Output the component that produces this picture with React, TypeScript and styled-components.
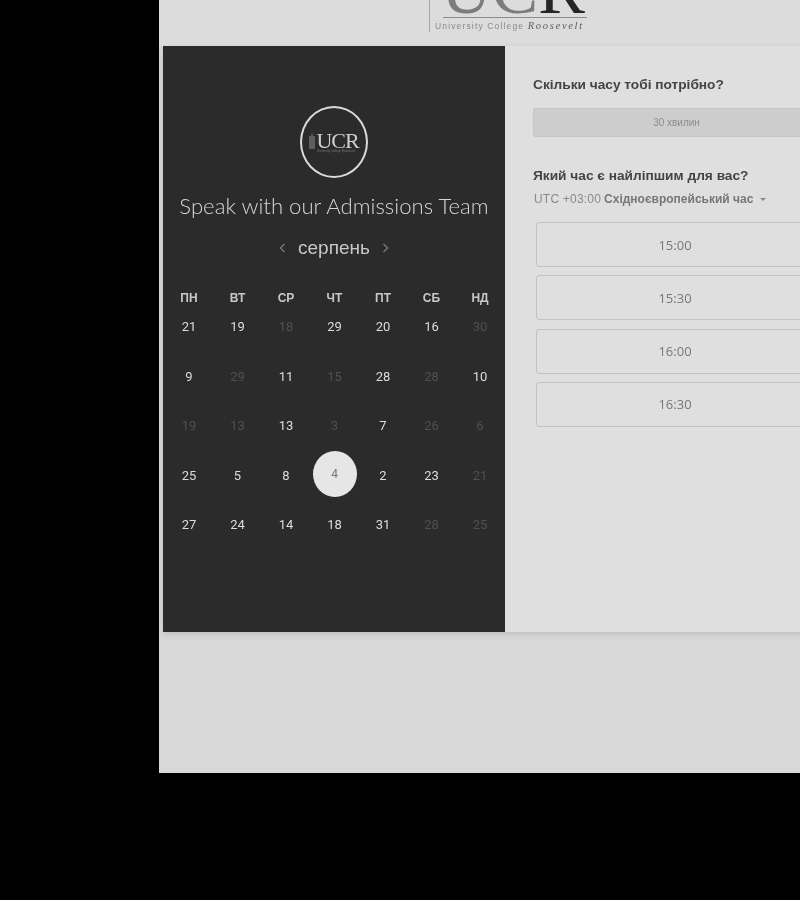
import React from "react";
import styled, { createGlobalStyle } from "styled-components";

const GlobalStyle = createGlobalStyle`
  html, body {
    margin: 0;
    height: 900px;
    overflow: hidden;
    background: #000;
    font-family: "Liberation Sans", Arial, sans-serif;
  }
`;

const Page = styled.div`
  width: 800px;
  height: 900px;
  overflow: hidden;
  padding-left: 159px;
  box-sizing: border-box;
`;

const Frame = styled.div`
  width: 690px;
  height: 773px;
  background: #d8d8d8;
  box-sizing: border-box;
  padding-left: 4px;
  filter: blur(0.5px);
`;

const Header = styled.div`
  height: 46px;
  overflow: hidden;
  display: flex;
  align-items: flex-end;
  padding-left: 270px;
  background: #dcdcdc;
  margin-left: -4px;
`;

const Logo = styled.div`
  width: 157px;
  height: 60px;
  flex: none;
  margin-bottom: 14px;
  position: relative;
  border-left: 1px solid #a8a8a8;
`;

const LogoMark = styled.div`
  position: absolute;
  left: 13px;
  right: 0;
  top: 0;
  height: 45px;
  overflow: hidden;
  border-bottom: 1px solid #8c8c8c;
  font-family: "Liberation Serif", serif;
  font-size: 70px;
  line-height: 36px;
  text-indent: -2px;
  color: #7c7c7c;
  white-space: nowrap;
`;

const LogoMarkDark = styled.span`
  color: #262626;
`;

const LogoCaption = styled.div`
  position: absolute;
  left: 5px;
  bottom: 1px;
  font-size: 8.5px;
  letter-spacing: 1.15px;
  color: #8a8a8a;
  white-space: nowrap;
`;

const LogoCaptionName = styled.span`
  font-family: "Liberation Serif", serif;
  font-style: italic;
  font-size: 10.5px;
  letter-spacing: 1.7px;
  color: #606060;
`;

const Card = styled.div`
  display: flex;
  height: 586px;
  width: 674px;
  box-shadow: 0 2px 6px rgba(0, 0, 0, 0.12);
`;

const LeftPanel = styled.div`
  width: 342px;
  flex: none;
  background: #2b2b2b;
  color: #e6e6e6;
  display: flex;
  flex-direction: column;
  align-items: center;
  padding-top: 60px;
  box-sizing: border-box;
`;

const Badge = styled.div`
  width: 64px;
  height: 68px;
  border: 2px solid #dadada;
  border-radius: 50%;
  display: flex;
  flex-direction: column;
  align-items: center;
  justify-content: center;
  position: relative;
`;

const BadgeLetters = styled.div`
  font-family: "Liberation Serif", serif;
  font-size: 22px;
  line-height: 17px;
  letter-spacing: -1px;
  color: #cfcfcf;
  margin-left: 7px;
`;

const BadgeCaption = styled.div`
  font-size: 3px;
  line-height: 3px;
  margin-top: 1px;
  margin-left: 4px;
  color: #7a7a7a;
  white-space: nowrap;
`;

const BadgeTower = styled.svg`
  position: absolute;
  left: 6px;
  top: 24px;
`;

const Title = styled.div`
  font-family: Lato, sans-serif;
  font-weight: 300;
  font-size: 22.15px;
  line-height: 28px;
  margin-top: 14px;
  color: #d6d6d6;
  white-space: nowrap;
`;

const MonthRow = styled.div`
  display: flex;
  align-items: center;
  gap: 12px;
  margin-top: 14px;
  height: 28px;
  font-size: 19px;
  color: #c8c8c8;
`;

const Chevron = styled.svg`
  display: block;
`;

const HeadRow = styled.div`
  display: grid;
  grid-template-columns: repeat(7, 48.5px);
  margin-top: 24px;
  margin-left: 1px;
`;

const DayHead = styled.div`
  height: 24px;
  display: flex;
  justify-content: center;
  align-items: center;
  font-size: 12px;
  font-weight: 700;
  color: #c8c8c8;
`;

const Calendar = styled.div`
  display: grid;
  grid-template-columns: repeat(7, 48.5px);
  grid-auto-rows: 49.5px;
  margin-top: 4px;
  margin-left: 1px;
`;

const Day = styled.div<{ $active?: boolean }>`
  display: flex;
  justify-content: center;
  padding-top: 5px;
  font-family: Roboto, sans-serif;
  font-size: 13px;
  line-height: 16px;
  color: ${(p) => (p.$active ? "#dcdcdc" : "#505050")};
`;

const SelectedDay = styled.div`
  width: 44px;
  height: 46px;
  border-radius: 50%;
  background: #e6e6e6;
  color: #777;
  font-family: Roboto, sans-serif;
  font-size: 12px;
  display: flex;
  align-items: center;
  justify-content: center;
  justify-self: center;
  margin-top: -12px;
  box-sizing: border-box;
`;

const RightPanel = styled.div`
  flex: 1;
  background: #dfdfdf;
  padding: 30px 17px 0 28px;
  box-sizing: border-box;
`;

const Question = styled.div`
  font-size: 13.7px;
  line-height: 18px;
  font-weight: 700;
  color: #444;
`;

const DurationButton = styled.div`
  height: 29px;
  margin-top: 14px;
  background: #cdcdcd;
  border: 1px solid #c6c6c6;
  border-radius: 2px;
  box-sizing: border-box;
  display: flex;
  align-items: center;
  justify-content: center;
  font-size: 10px;
  color: #8c8c8c;
`;

const SecondQuestion = styled(Question)`
  margin-top: 30px;
`;

const Timezone = styled.div`
  display: flex;
  align-items: center;
  gap: 5px;
  margin-top: 6px;
  margin-left: 1px;
  font-size: 12px;
  line-height: 16px;
  letter-spacing: 0.2px;
  color: #8a8a8a;
`;

const TimezoneName = styled.span`
  font-weight: 700;
  letter-spacing: 0;
  color: #777;
  margin-left: -2px;
`;

const Caret = styled.span`
  width: 0;
  height: 0;
  border-left: 3.5px solid transparent;
  border-right: 3.5px solid transparent;
  border-top: 3.5px solid #8a8a8a;
  margin-left: 2px;
`;

const Slots = styled.div`
  display: flex;
  flex-direction: column;
  gap: 8.3px;
  margin: 15px 6px 0 3px;
`;

const Slot = styled.div`
  height: 45px;
  border: 1px solid #c2c2c2;
  border-radius: 3px;
  box-sizing: border-box;
  display: flex;
  align-items: center;
  justify-content: center;
  font-family: "Open Sans", sans-serif;
  font-size: 13px;
  color: #777;
`;

const heads = ["ПН", "ВТ", "СР", "ЧТ", "ПТ", "СБ", "НД"];

// [number, available]; 0 marks the selected day
const days: [number, boolean][] = [
  [21, true], [19, true], [18, false], [29, true], [20, true], [16, true], [30, false],
  [9, true], [29, false], [11, true], [15, false], [28, true], [28, false], [10, true],
  [19, false], [13, false], [13, true], [3, false], [7, true], [26, false], [6, false],
  [25, true], [5, true], [8, true], [0, true], [2, true], [23, true], [21, false],
  [27, true], [24, true], [14, true], [18, true], [31, true], [28, false], [25, false],
];

const slots = ["15:00", "15:30", "16:00", "16:30"];

export default function App() {
  return (
    <Page>
      <GlobalStyle />
      <Frame>
        <Header>
          <Logo>
            <LogoMark>
              UC<LogoMarkDark>R</LogoMarkDark>
            </LogoMark>
            <LogoCaption>
              University College <LogoCaptionName>Roosevelt</LogoCaptionName>
            </LogoCaption>
          </Logo>
        </Header>
        <Card>
          <LeftPanel>
            <Badge>
              <BadgeTower width="8" height="17" viewBox="0 0 8 17">
                <path d="M4 0l1 4h2v13H1V4h2z" fill="#5e5e5e" />
              </BadgeTower>
              <BadgeLetters>UCR</BadgeLetters>
              <BadgeCaption>University College Roosevelt</BadgeCaption>
            </Badge>
            <Title>Speak with our Admissions Team</Title>
            <MonthRow>
              <Chevron width="7" height="10" viewBox="0 0 7 10">
                <path d="M5.5 1L1.5 5l4 4" fill="none" stroke="#777" strokeWidth="1.4" />
              </Chevron>
              <span>серпень</span>
              <Chevron width="7" height="10" viewBox="0 0 7 10">
                <path d="M1.5 1l4 4-4 4" fill="none" stroke="#777" strokeWidth="1.4" />
              </Chevron>
            </MonthRow>
            <HeadRow>
              {heads.map((h) => (
                <DayHead key={h}>{h}</DayHead>
              ))}
            </HeadRow>
            <Calendar>
              {days.map(([n, active], i) =>
                n === 0 ? (
                  <SelectedDay key={i}>4</SelectedDay>
                ) : (
                  <Day key={i} $active={active}>
                    {n}
                  </Day>
                )
              )}
            </Calendar>
          </LeftPanel>
          <RightPanel>
            <Question>Скільки часу тобі потрібно?</Question>
            <DurationButton>30 хвилин</DurationButton>
            <SecondQuestion>Який час є найліпшим для вас?</SecondQuestion>
            <Timezone>
              UTC +03:00 <TimezoneName>Східноєвропейський час</TimezoneName>
              <Caret />
            </Timezone>
            <Slots>
              {slots.map((s) => (
                <Slot key={s}>{s}</Slot>
              ))}
            </Slots>
          </RightPanel>
        </Card>
      </Frame>
    </Page>
  );
}
